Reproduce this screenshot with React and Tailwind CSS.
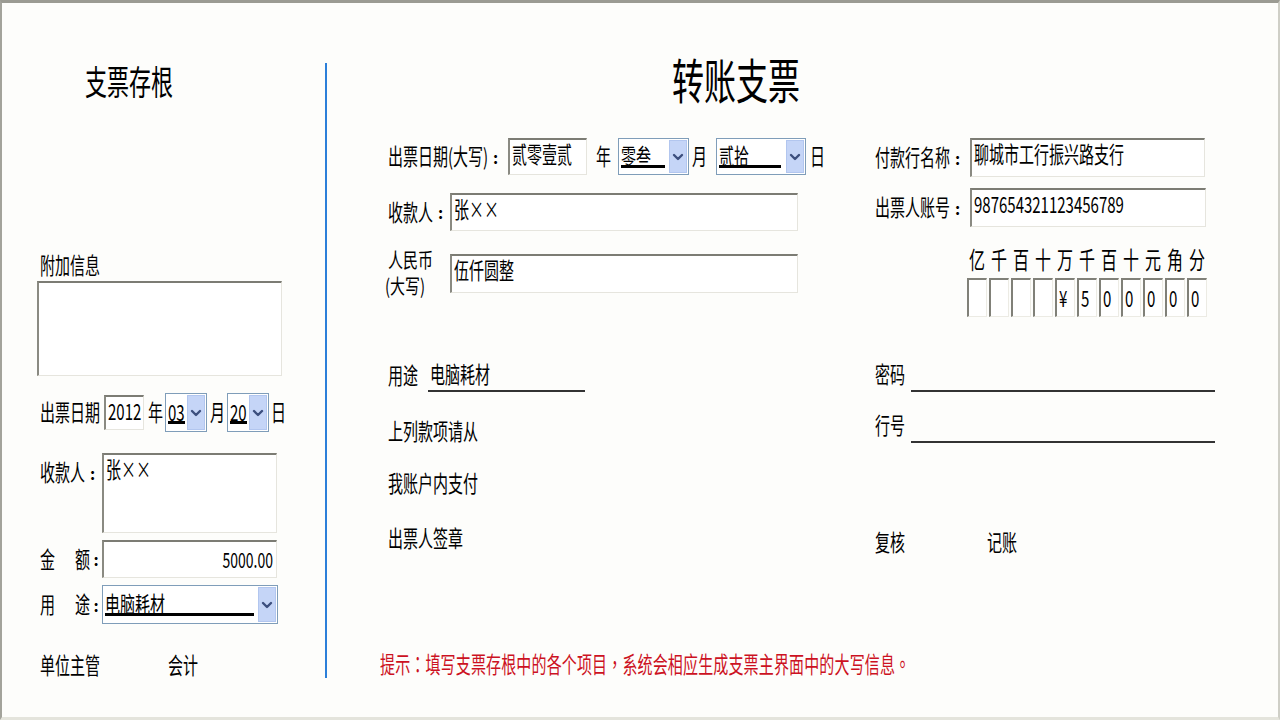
import { useState } from "react";

// vertically stretched text, like the old XP form in the screenshot
function T({ children, className = "" }) {
  return (
    <span className={"inline-block whitespace-nowrap scale-y-[1.5] " + className}>
      {children}
    </span>
  );
}

// full-width colon, centred as on the old form
function C() {
  return <span className="inline-block w-[15px] text-center font-bold">:</span>;
}

function Box({ children, className = "", textClass = "" }) {
  return (
    <div
      className={
        "flex items-start bg-white border-t-2 border-l-2 border-t-[#7c7c74] border-l-[#8a8a82] border-r border-b border-r-[#e6e5de] border-b-[#e6e5de] px-[2px] pt-[4px] " +
        className
      }
    >
      <T className={"text-[15px] leading-[20px] " + textClass}>{children}</T>
    </div>
  );
}

function Chevron() {
  return (
    <svg width="12" height="10" viewBox="0 0 12 10">
      <polyline
        points="2,3 6,7 10,3"
        fill="none"
        stroke="#3c4f7e"
        strokeWidth="2.4"
        strokeLinecap="round"
        strokeLinejoin="round"
      />
    </svg>
  );
}

function Select({ value, className = "", lineClass = "" }) {
  return (
    <div
      className={
        "flex items-stretch bg-white border border-[#7f9db9] p-[1px] " + className
      }
    >
      <div className="flex-1 flex items-center pl-[1px] pr-1 min-w-0">
        <div className={"border-b-[3px] border-black leading-[18px] " + lineClass}>
          <T className="text-[15px]">{value}</T>
        </div>
      </div>
      <div className="w-[18px] flex items-center justify-center bg-[#c5d5f7] border border-[#b2c6ef]">
        <Chevron />
      </div>
    </div>
  );
}

function Label({ children, className = "" }) {
  return <T className={"text-[15px] " + className}>{children}</T>;
}

export default function App() {
  const [cells] = useState(["", "", "", "", "¥", "5", "0", "0", "0", "0", "0"]);
  const units = ["亿", "千", "百", "十", "万", "千", "百", "十", "元", "角", "分"];

  return (
    <div className="w-[1280px] h-[720px] overflow-hidden bg-[#fdfdfb] text-black font-['Noto_Sans_CJK_SC',sans-serif] border-t-[3px] border-t-[#9b9b93] border-l-2 border-l-[#a3a39b] border-r-2 border-r-[#cfcfc7] border-b-[3px] border-b-[#e4e4dc] flex">
      {/* 存根 */}
      <div className="w-[323px] shrink-0 pl-[38px] flex flex-col">
        <div className="mt-[57px] h-[40px] flex items-center pl-[45px]">
          <T className="text-[22px] scale-y-[1.55]">支票存根</T>
        </div>
        <div className="mt-[155px] h-[20px] flex items-center">
          <Label>附加信息</Label>
        </div>
        <div className="mt-[6px] -ml-[3px] w-[245px] h-[95px] bg-white border-t-2 border-l-2 border-t-[#7c7c74] border-l-[#8a8a82] border-r border-b border-r-[#e6e5de] border-b-[#e6e5de]" />

        <div className="mt-[17px] h-[39px] flex items-center">
          <Label>出票日期</Label>
          <Box className="ml-[4px] w-[40px] h-[35px]" textClass="text-[13px]">
            2012
          </Box>
          <Label className="ml-[4px]">年</Label>
          <Select value="03" className="ml-[2px] w-[42px] h-[39px]" />
          <Label className="ml-[3px]">月</Label>
          <Select value="20" className="ml-[2px] w-[42px] h-[39px]" />
          <Label className="ml-[2px]">日</Label>
        </div>

        <div className="mt-[21px] flex items-start">
          <div className="mt-[8px] w-[62px] flex">
            <Label>收款人</Label>
            <C />
          </div>
          <Box className="w-[175px] h-[80px]">张××</Box>
        </div>

        <div className="mt-[7px] flex items-center">
          <div className="w-[62px] flex items-center">
            <Label>金</Label>
            <Label className="ml-[20px]">额</Label>
            <C />
          </div>
          <div className="w-[175px] h-[38px] flex items-center justify-end bg-white border-t-2 border-l-2 border-t-[#7c7c74] border-l-[#8a8a82] border-r border-b border-r-[#e6e5de] border-b-[#e6e5de] pr-[3px]">
            <T className="text-[14px]">5000.00</T>
          </div>
        </div>

        <div className="mt-[7px] flex items-center">
          <div className="w-[62px] flex items-center">
            <Label>用</Label>
            <Label className="ml-[20px]">途</Label>
            <C />
          </div>
          <Select value="电脑耗材" className="w-[176px] h-[39px]" lineClass="w-full" />
        </div>

        <div className="mt-[31px] h-[20px] flex items-center">
          <Label className="w-[128px]">单位主管</Label>
          <Label>会计</Label>
        </div>
      </div>

      {/* 分隔线 */}
      <div className="w-[2px] shrink-0 mt-[60px] h-[615px] bg-[#2c7fd9]" />

      {/* 主界面 */}
      <div className="flex-1 flex flex-col">
        <div className="mt-[52px] h-[46px] flex items-center pl-[345px]">
          <T className="text-[32px] scale-y-[1.5]">转账支票</T>
        </div>

        <div className="flex">
          {/* 左半 */}
          <div className="w-[548px] shrink-0 pl-[61px] flex flex-col">
            <div className="mt-[37px] h-[37px] flex items-center">
              <div className="w-[120px] flex items-center">
                <Label>出票日期(大写)</Label>
                <C />
              </div>
              <Box className="w-[79px] h-[37px]" textClass="text-[14px]">
                贰零壹贰
              </Box>
              <Label className="ml-[9px]">年</Label>
              <Select value="零叁" className="ml-[7px] w-[71px] h-[37px]" lineClass="w-[44px]" />
              <Label className="ml-[3px]">月</Label>
              <Select value="贰拾" className="ml-[9px] w-[90px] h-[37px]" lineClass="w-[62px]" />
              <Label className="ml-[4px]">日</Label>
            </div>

            <div className="mt-[18px] flex items-center">
              <div className="w-[62px] flex items-center">
                <Label>收款人</Label>
                <C />
              </div>
              <Box className="w-[348px] h-[38px]">张××</Box>
            </div>

            <div className="mt-[17px] h-[50px] flex items-center">
              <div className="w-[62px] flex flex-col gap-[8px] leading-[18px]">
                <Label className="scale-y-[1.35]">人民币</Label>
                <Label className="-ml-[3px] scale-y-[1.35]">(大写)</Label>
              </div>
              <Box className="w-[348px] h-[39px]">伍仟圆整</Box>
            </div>

            <div className="mt-[60px] h-[34px] flex items-center">
              <Label>用途</Label>
              <div className="ml-[10px] w-[157px] h-[34px] flex items-center border-b-2 border-[#333] pl-[2px]">
                <Label>电脑耗材</Label>
              </div>
            </div>

            <div className="mt-[29px] h-[20px] flex items-center">
              <Label>上列款项请从</Label>
            </div>
            <div className="mt-[32px] h-[20px] flex items-center">
              <Label>我账户内支付</Label>
            </div>
            <div className="mt-[35px] h-[20px] flex items-center">
              <Label>出票人签章</Label>
            </div>
          </div>

          {/* 右半 */}
          <div className="flex-1 flex flex-col">
            <div className="mt-[37px] h-[39px] flex items-center">
              <div className="w-[95px] flex items-center">
                <Label>付款行名称</Label>
                <C />
              </div>
              <Box className="w-[235px] h-[39px]">聊城市工行振兴路支行</Box>
            </div>
            <div className="mt-[11px] h-[39px] flex items-center">
              <div className="w-[95px] flex items-center">
                <Label>出票人账号</Label>
                <C />
              </div>
              <Box className="w-[236px] h-[39px]" textClass="text-[14px]">
                987654321123456789
              </Box>
            </div>

            <div className="mt-[21px] h-[20px] flex pl-[91px]">
              {units.map((u, i) => (
                <div key={i} className="w-[22px] flex items-center justify-center">
                  <Label className="text-[16px]">{u}</Label>
                </div>
              ))}
            </div>
            <div className="mt-[10px] h-[39px] flex gap-[2px] pl-[92px]">
              {cells.map((c, i) => (
                <div
                  key={i}
                  className="w-[20px] h-[39px] flex items-center bg-white border-t-2 border-l-2 border-t-[#808078] border-l-[#808078] border-r border-b border-r-[#ecebe4] border-b-[#ecebe4] pl-[2px]"
                >
                  <T className="text-[15px]">{c}</T>
                </div>
              ))}
            </div>

            <div className="mt-[39px] h-[36px] flex items-center">
              <Label>密码</Label>
              <div className="ml-[6px] w-[304px] h-[36px] border-b-2 border-[#333]" />
            </div>
            <div className="mt-[15px] h-[36px] flex items-center">
              <Label>行号</Label>
              <div className="ml-[6px] w-[304px] h-[36px] border-b-2 border-[#333]" />
            </div>

            <div className="mt-[89px] h-[20px] flex items-center">
              <Label className="w-[112px]">复核</Label>
              <Label>记账</Label>
            </div>
          </div>
        </div>

        <div className="mt-[102px] h-[20px] flex items-center pl-[53px]">
          <T className="text-[15px] tracking-[0.15px] text-[#cc1122] font-['Noto_Sans_CJK_TC',sans-serif]">
            提示：填写支票存根中的各个项目，系统会相应生成支票主界面中的大写信息。
          </T>
        </div>
      </div>
    </div>
  );
}
